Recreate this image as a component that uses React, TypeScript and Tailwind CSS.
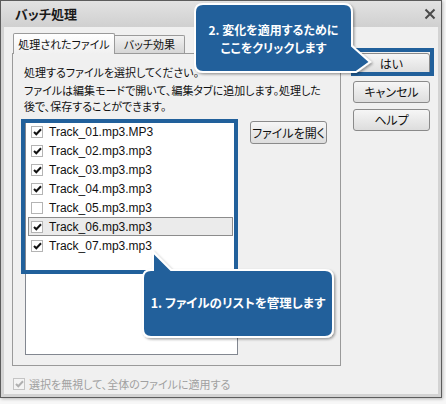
import React from 'react';

const jp = "font-['Noto_Sans_CJK_JP',sans-serif] [font-feature-settings:'palt']";

const files = [
  { name: 'Track_01.mp3.MP3', checked: true },
  { name: 'Track_02.mp3.mp3', checked: true },
  { name: 'Track_03.mp3.mp3', checked: true },
  { name: 'Track_04.mp3.mp3', checked: true },
  { name: 'Track_05.mp3.mp3', checked: false },
  { name: 'Track_06.mp3.mp3', checked: true, selected: true },
  { name: 'Track_07.mp3.mp3', checked: true },
];

const Check = ({ checked, disabled }: { checked: boolean; disabled?: boolean }) => (
  <div
    className={`w-[12px] h-[12px] border flex items-center justify-center ${
      disabled ? 'border-[#c4c4c4] bg-[#f4f4f4]' : 'border-[#b4b4b4] bg-white'
    }`}
  >
    {checked && (
      <svg width="9" height="8" viewBox="0 0 9 8">
        <path
          d="M1 4 L3.3 6.3 L8 1.3"
          fill="none"
          stroke={disabled ? '#b0b0b0' : '#111'}
          strokeWidth="2"
        />
      </svg>
    )}
  </div>
);

const Button = ({ label, className = '' }: { label: string; className?: string }) => (
  <div
    className={`h-[22px] w-[77px] flex items-center justify-center rounded-[3px] border border-[#8a8a8a] bg-gradient-to-b from-[#f6f6f6] to-[#dddddd] text-[12px] text-[#111] ${jp} ${className}`}
  >
    {label}
  </div>
);

const App = () => {
  return (
    <div className="relative w-[446px] h-[404px] bg-[#f7f7f7] overflow-hidden">
      <div className="w-[442px] h-[398px] border border-[#5c5c5c] bg-[#d3d3d3] flex flex-col shadow-[1px_1px_3px_rgba(0,0,0,0.25)]">
        {/* title bar */}
        <div className="h-[26px] flex items-center justify-between pl-[14px] pr-[5px] bg-gradient-to-b from-[#e2e2e2] to-[#d0d0d0]">
          <span className={`text-[13px] font-bold text-[#1a1a1a] ${jp}`}>バッチ処理</span>
          <svg width="12" height="12" viewBox="0 0 12 12">
            <path d="M1.5 1.5 L10.5 10.5 M10.5 1.5 L1.5 10.5" stroke="#4a4a4a" strokeWidth="2" />
          </svg>
        </div>

        {/* content */}
        <div className="flex-1 mx-[3px] mb-[3px] bg-[#f0f0f0] flex pl-[8px] pt-[6px]">
          {/* left column */}
          <div className="w-[329px] flex flex-col">
            <div className="h-[20px] flex items-end relative z-10">
              <div
                className={`ml-[1px] w-[102px] h-[21px] -mb-[1px] border border-b-0 border-[#9a9a9a] rounded-t-[2px] bg-gradient-to-b from-[#ffffff] to-[#f0f0f0] flex items-center justify-center text-[11px] text-[#111] ${jp}`}
              >
                処理されたファイル
              </div>
              <div
                className={`w-[70px] h-[18px] border border-l-0 border-b-0 border-[#9a9a9a] rounded-tr-[2px] bg-gradient-to-b from-[#f2f2f2] to-[#d6d6d6] flex items-center justify-center text-[11px] text-[#111] ${jp}`}
              >
                バッチ効果
              </div>
            </div>

            <div className="h-[313px] border border-[#9a9a9a] bg-[#f0f0f0] pl-[11px] pt-[10px]">
              <div className={`text-[11px] leading-[16px] text-[#111] whitespace-nowrap ${jp}`}>
                処理するファイルを選択してください。
              </div>
              <div className={`mt-[2px] text-[11px] leading-[16px] text-[#111] whitespace-nowrap ${jp}`}>
                ファイルは編集モードで開いて、編集タブに追加します。処理した
                <br />
                後で、保存することができます。
              </div>

              <div className="mt-[6px] flex items-start">
                <div className="relative ml-[1px] w-[213px] h-[235px] border border-[#828790] bg-white pl-[2px] pr-[4px] pt-[1px]">
                  {files.map((f) => (
                    <div
                      key={f.name}
                      className={`h-[19px] flex items-center pl-[2px] border ${
                        f.selected ? 'border-[#8c8c8c] bg-[#ebebeb]' : 'border-transparent'
                      }`}
                    >
                      <Check checked={f.checked} />
                      <span className="ml-[6px] text-[12px] text-[#111] font-['Liberation_Sans',sans-serif]">
                        {f.name}
                      </span>
                    </div>
                  ))}
                  {/* highlight around list */}
                  <div className="absolute -left-[5px] -top-[2px] w-[217px] h-[155px] border-[4px] border-[#21609b]" />
                </div>
                <Button label="ファイルを開く" className="ml-[12px] mt-[1px] h-[23px]" />
              </div>
            </div>

            <div className="mt-[10px] flex items-center ml-[1px]">
              <Check checked disabled />
              <span className={`ml-[4px] text-[11px] text-[#a0a0a0] ${jp}`}>
                選択を無視して、全体のファイルに適用する
              </span>
            </div>
          </div>

          {/* right column */}
          <div className="ml-[12px] pt-[20px] flex flex-col gap-[6px]">
            <div className="relative">
              <Button label="はい" />
              <div className="absolute -left-[2px] -top-[5px] w-[83px] h-[28px] border-[4px] border-[#21609b]" />
            </div>
            <Button label="キャンセル" />
            <Button label="ヘルプ" />
          </div>
        </div>
      </div>

      {/* callouts */}
      <svg className="absolute inset-0 pointer-events-none" width="446" height="404">
        <defs>
          <filter id="sh" x="-10%" y="-10%" width="130%" height="140%">
            <feDropShadow dx="1.5" dy="1.5" stdDeviation="1.2" floodColor="#000" floodOpacity="0.35" />
          </filter>
        </defs>
        <path
          d="M203 4 H344 Q352 4 352 12 V46 L370 62 L356 72 H203 Q195 72 195 64 V12 Q195 4 203 4 Z"
          fill="#21609b"
          stroke="#fff"
          strokeWidth="2"
          filter="url(#sh)"
        />
        <path
          d="M143 278 Q143 270 151 270 H153 V252 L171 270 H325 Q333 270 333 278 V329 Q333 337 325 337 H151 Q143 337 143 329 Z"
          fill="#21609b"
          stroke="#fff"
          strokeWidth="2"
          filter="url(#sh)"
        />
      </svg>
      <div
        className={`absolute left-[195px] top-[21px] w-[157px] text-center text-[12px] leading-[18px] font-bold text-white whitespace-nowrap ${jp}`}
      >
        2. 変化を適用するために
        <br />
        ここをクリックします
      </div>
      <div
        className={`absolute left-[143px] top-[294px] w-[190px] text-center text-[12.5px] leading-[17px] font-bold text-white whitespace-nowrap ${jp}`}
      >
        1. ファイルのリストを管理します
      </div>
    </div>
  );
};

export default App;
